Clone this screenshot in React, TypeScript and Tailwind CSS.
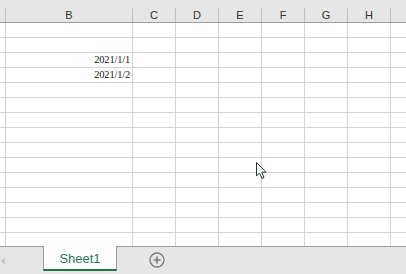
import React from "react";

const cols = ["C", "D", "E", "F", "G", "H"];
const rows = Array.from({ length: 15 }, (_, i) => i);
const data: Record<number, string> = { 2: "2021/1/1", 3: "2021/1/2" };

export default function App() {
  return (
    <div
      className="relative w-[406px] h-[274px] overflow-hidden bg-white flex flex-col"
      style={{ fontFamily: '"Liberation Sans", Arial, sans-serif' }}
    >
      {/* column header */}
      <div className="flex h-[23px] pt-[8px] bg-[#e6e6e6] border-b border-[#9f9f9f] text-[11px] text-[#333]">
        <div className="w-[6px] shrink-0 border-r border-[#c0c0c0]" />
        <div className="w-[127px] shrink-0 border-r border-[#c0c0c0] flex items-center justify-center leading-none">
          B
        </div>
        {cols.map((c) => (
          <div
            key={c}
            className="w-[43px] shrink-0 border-r border-[#c0c0c0] flex items-center justify-center leading-none"
          >
            {c}
          </div>
        ))}
        <div className="flex-1" />
      </div>

      {/* grid */}
      <div className="flex-1 flex flex-col overflow-hidden border-b border-[#9f9f9f]">
        {rows.map((r) => (
          <div key={r} className="flex h-[15px] shrink-0 border-b border-[#d4d4d4]">
            <div className="w-[6px] shrink-0 border-r border-[#d4d4d4]" />
            <div
              className="w-[127px] shrink-0 border-r border-[#d4d4d4] flex items-center justify-end pr-[2px] text-[10.5px] leading-none text-[#222] tracking-[-0.2px]"
              style={{ fontFamily: '"Liberation Serif", "Times New Roman", serif' }}
            >
              {data[r] ?? ""}
            </div>
            {cols.map((c) => (
              <div key={c} className="w-[43px] shrink-0 border-r border-[#d4d4d4]" />
            ))}
            <div className="flex-1" />
          </div>
        ))}
      </div>

      {/* sheet tab bar */}
      <div className="h-[27px] shrink-0 bg-[#e6e6e6] flex items-start">
        <div className="w-[43px] h-full flex items-center pl-[1px]">
          <svg width="5" height="8" viewBox="0 0 5 8">
            <path d="M4 0 L0 4 L4 8 Z" fill="#c8c8c8" />
          </svg>
        </div>
        <div className="w-[74px] h-[25px] -mt-px bg-white border-x border-[#9f9f9f] border-b-2 border-b-[#217346] flex items-center justify-center text-[13px] text-[#2a7a5a] leading-none pt-[1px]">
          Sheet1
        </div>
        <div className="ml-[32px] h-full flex items-center pb-[1px]">
          <svg width="16" height="16" viewBox="0 0 16 16">
            <circle cx="8" cy="8" r="7" fill="none" stroke="#7a7a7a" strokeWidth="1.3" />
            <path d="M8 4.5 V11.5 M4.5 8 H11.5" stroke="#7a7a7a" strokeWidth="1.6" />
          </svg>
        </div>
      </div>

      {/* mouse cursor overlay */}
      <svg
        className="absolute left-[255px] top-[161px]"
        width="14"
        height="20"
        viewBox="0 0 14 20"
      >
        <path
          d="M1.5 1.5 L1.5 15 L4.5 12 L7 17.5 L9 16.5 L6.8 11.2 L11 11.2 Z"
          fill="#ffffff"
          stroke="#1f3d2c"
          strokeWidth="1"
          strokeLinejoin="miter"
        />
      </svg>
    </div>
  );
}
